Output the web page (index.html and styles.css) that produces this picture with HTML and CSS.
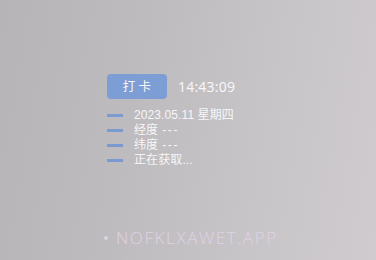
FILE: index.html
```html
<!DOCTYPE html>
<html>
<head>
<meta charset="utf-8">
<link rel="stylesheet" href="styles.css">
</head>
<body>
<div class="page">
  <div class="card">
    <div class="head">
      <div class="btn">打 卡</div>
      <div class="time">14:43:09</div>
    </div>
    <ul class="rows">
      <li class="row"><span class="bar"></span><span class="label">2023.05.11 星期四</span></li>
      <li class="row"><span class="bar"></span><span class="label">经度</span><span class="dash">---</span></li>
      <li class="row"><span class="bar"></span><span class="label">纬度</span><span class="dash">---</span></li>
      <li class="row"><span class="bar"></span><span class="label">正在获取...</span></li>
    </ul>
  </div>
  <div class="mark"><span class="dot"></span><span>NOFKLXAWET.APP</span></div>
</div>
</body>
</html>
```
FILE: styles.css
```css
html, body {
  margin: 0;
  padding: 0;
}
body {
  width: 376px;
  height: 260px;
  overflow: hidden;
  background: linear-gradient(100deg, #b6b4b7 0%, #bdbbbe 35%, #c8c5c8 70%, #cfcbce 100%);
  font-family: "Noto Sans", "Noto Sans CJK SC", sans-serif;
  color: #f6f6f8;
}
.page {
  padding: 74px 0 0 107px;
}
.head {
  display: flex;
  align-items: center;
}
.btn {
  width: 60px;
  height: 25px;
  border-radius: 4px;
  background: #7c9ed5;
  color: #f4f6fb;
  font-size: 12.5px;
  line-height: 25px;
  text-align: center;
}
.time {
  margin-left: 11px;
  font-size: 14px;
  letter-spacing: 0.2px;
}
.rows {
  list-style: none;
  margin: 9px 0 0;
  padding: 0;
}
.row {
  display: flex;
  align-items: center;
  height: 15px;
  font-family: "Liberation Sans", "Noto Sans CJK SC", sans-serif;
  font-size: 12px;
  line-height: 15px;
  letter-spacing: 0.1px;
}
.dash {
  margin-left: 4px;
  letter-spacing: 1.6px;
}
.bar {
  width: 16px;
  height: 3px;
  background: #7b9bd0;
  margin-right: 11px;
}
.mark {
  display: flex;
  align-items: center;
  margin-top: 59px;
  margin-left: -3px;
  color: #e0d1e4;
  font-family: "Open Sans", sans-serif;
  font-weight: 300;
  font-size: 17px;
  line-height: 22px;
  letter-spacing: 1.6px;
}
.dot {
  width: 4px;
  height: 4px;
  border-radius: 50%;
  background: #e0d1e4;
  margin-right: 8px;
}
```
